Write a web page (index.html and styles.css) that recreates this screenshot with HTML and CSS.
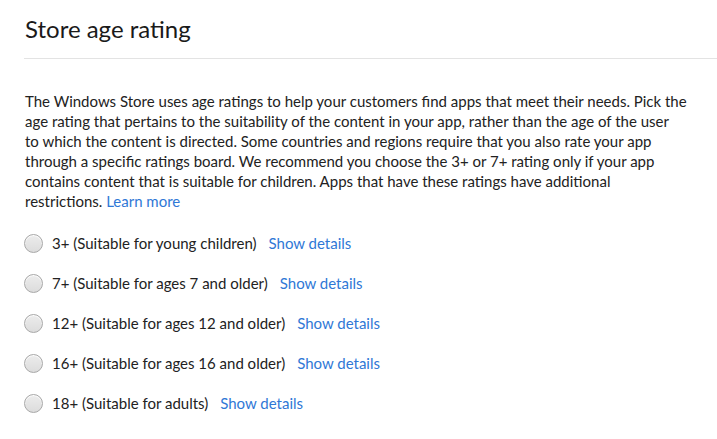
FILE: index.html
```html
<!DOCTYPE html>
<html lang="en">
<head>
    <meta charset="UTF-8">
    <title>Store age rating</title>
    <link rel="stylesheet" href="styles.css">
</head>
<body>
<div class="page">
    <h1 class="title">Store age rating</h1>
    <p class="intro">
        The Windows Store uses age ratings to help your customers find apps that meet their needs. Pick the<br>
        age rating that pertains to the suitability of the content in your app, rather than the age of the user<br>
        to which the content is directed. Some countries and regions require that you also rate your app<br>
        through a specific ratings board. We recommend you choose the 3+ or 7+ rating only if your app<br>
        contains content that is suitable for children. Apps that have these ratings have additional<br>
        restrictions. <a href="javascript:;">Learn more</a>
    </p>
    <ul class="ratings">
        <li>
            <label><input type="radio" name="age"><span>3+ (Suitable for young children)</span></label>
            <a href="javascript:;">Show details</a>
        </li>
        <li>
            <label><input type="radio" name="age"><span>7+ (Suitable for ages 7 and older)</span></label>
            <a href="javascript:;">Show details</a>
        </li>
        <li>
            <label><input type="radio" name="age"><span>12+ (Suitable for ages 12 and older)</span></label>
            <a href="javascript:;">Show details</a>
        </li>
        <li>
            <label><input type="radio" name="age"><span>16+ (Suitable for ages 16 and older)</span></label>
            <a href="javascript:;">Show details</a>
        </li>
        <li>
            <label><input type="radio" name="age"><span>18+ (Suitable for adults)</span></label>
            <a href="javascript:;">Show details</a>
        </li>
    </ul>
</div>
</body>
</html>
```

FILE: styles.css
```css
* {
    margin: 0;
    padding: 0;
}

body {
    background-color: #fff;
    color: #222;
    font-family: Lato, "Open Sans", sans-serif;
    font-size: 15px;
}

a {
    color: #2f78d6;
    text-decoration: none;
}

ul {
    list-style: none;
}

.page {
    padding: 13px 0 0 24px;
}

.title {
    padding-left: 1px;
    padding-bottom: 13px;
    border-bottom: 1px solid #e3e3e3;
    font-size: 24px;
    font-weight: 400;
    line-height: 32px;
    color: #1a1a1a;
}

.intro {
    margin-top: 32px;
    padding-left: 1px;
    line-height: 20px;
    white-space: nowrap;
}

.ratings {
    margin-top: 12px;
}

.ratings li {
    display: flex;
    align-items: center;
    height: 40px;
}

.ratings label {
    display: flex;
    align-items: center;
}

.ratings input {
    appearance: none;
    -webkit-appearance: none;
    width: 19px;
    height: 19px;
    margin-right: 9px;
    border: 1px solid #a8a8a8;
    border-radius: 50%;
    background: linear-gradient(#ececec, #dcdcdc);
    box-shadow: inset 0 1px 1px #fff;
}

.ratings a {
    margin-left: 12px;
}
```
